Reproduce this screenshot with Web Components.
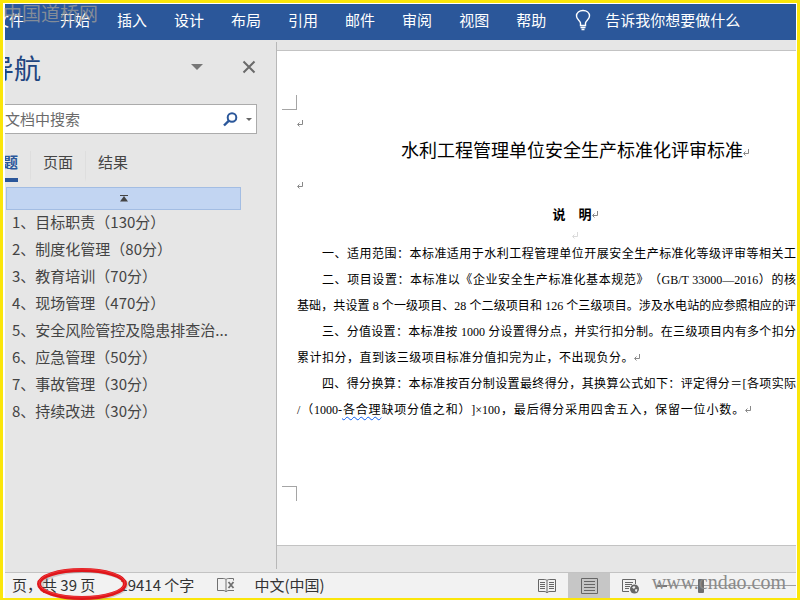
<!DOCTYPE html>
<html lang="zh-CN">
<head>
<meta charset="utf-8">
<title>水利工程管理单位安全生产标准化评审标准</title>
<style>
  html, body { margin: 0; height: 100%; }
  body { font: 15px/20px "Noto Sans CJK SC", sans-serif; color: #444; background: #fbe60a; overflow: hidden; text-spacing-trim: space-all; }
</style>
</head>
<body>
<app-window></app-window>
<script>
class BaseElement extends HTMLElement {
  constructor() {
    super();
    this.attachShadow({ mode: "open" }).innerHTML =
      "<style>*{box-sizing:border-box}button{font:inherit;color:inherit;background:none;border:0;padding:0;margin:0;white-space:nowrap}</style>" +
      this.constructor.markup;
  }
}

class AppWindow extends BaseElement {
  static markup = `
  <style>
    :host { display: flex; flex-direction: column; box-sizing: border-box; min-height: 100vh; border: 3px solid #fbe60a; position: relative; }
    .inner { flex: 1; display: flex; flex-direction: column; background: #e6e6e6; border: solid #fff; border-width: 1px 1px 0 2px; overflow: hidden; }
    main { flex: 1; display: flex; }
    doc-view { flex: 1; min-width: 0; }
    .brand { position: absolute; left: 0; top: 0; font: 19px/20px "Noto Sans CJK SC", sans-serif; color: #9a9a98; opacity: .8; white-space: nowrap; pointer-events: none; }
    .site { position: absolute; right: 11px; bottom: 4px; font: 20px/24px "Liberation Serif", serif; color: #8a8a8a; pointer-events: none; }
    .ring { position: absolute; left: 31px; bottom: -3px; width: 98px; height: 36px; pointer-events: none; }
  </style>
  <div class="inner">
    <ribbon-bar></ribbon-bar>
    <main><nav-pane></nav-pane><doc-view></doc-view></main>
    <status-bar></status-bar>
  </div>
  <div class="brand">中国道桥网</div>
  <div class="site">www.cndao.com</div>
  <svg class="ring" viewBox="0 0 98 36">
    <ellipse cx="50" cy="20" rx="42" ry="14" fill="none" stroke="#777" stroke-opacity=".3" stroke-width="4"/>
    <ellipse cx="48" cy="19" rx="43" ry="14" fill="none" stroke="#e0161b" stroke-width="4"/>
    <ellipse cx="48" cy="18" rx="43" ry="14" fill="none" stroke="#ff6a6a" stroke-opacity=".4" stroke-width="1"/>
  </svg>`;
}

class RibbonBar extends BaseElement {
  static markup = `
  <style>
    :host { display: flex; align-items: center; height: 36px; padding-bottom: 5px; box-sizing: border-box; background: #2b579a; color: #fff; margin-left: -11px; gap: 27px; white-space: nowrap; }
    .file { margin-right: 9px; }
    .tell { display: flex; align-items: center; gap: 14px; margin-left: 2px; }
  </style>
  <button class="file">文件</button><button>开始</button><button>插入</button><button>设计</button><button>布局</button><button>引用</button><button>邮件</button><button>审阅</button><button>视图</button><button>帮助</button>
  <button class="tell">
    <svg width="16" height="22" viewBox="0 0 16 22" fill="none" stroke="#fff" stroke-width="1.4"><path d="M5.500 16.500v-2.500C5 11.500 1.500 10.500 1.500 7 1.500 3.700 4.300 1.500 8 1.500s6.500 2.200 6.500 5.500C14.500 10.500 11 11.500 10.500 14v2.500zM5.500 18.500h5M6.500 20.500h3"/></svg>
    告诉我你想要做什么</button>`;
}

class NavPane extends BaseElement {
  static markup = `
  <style>
    :host { display: flex; flex-direction: column; box-sizing: border-box; width: 290px; margin: 2px 0 3px -18px; border-right: 1px solid #b8b8b8; }
    header { display: flex; align-items: center; height: 50px; padding-right: 20px; }
    h1 { margin: 0; padding-top: 2px; font-size: 27px; line-height: 36px; font-weight: 400; color: #1e4580; flex: 1; }
    header button { display: flex; }
    header button + button { margin-left: 39px; }
    .search { display: flex; align-items: center; height: 30px; margin: 12px 19px 0 -4px; border: 1px solid #ababab; background: #fff; padding: 0 4px 0 6px; }
    input { flex: 1; min-width: 0; border: 0; outline: 0; padding: 0; background: none; font: inherit; color: #444; }
    input::placeholder { color: #6b6b6b; opacity: 1; }
    .search button { display: flex; }
    .search button + button { margin-left: 8px; }
    .tabs { display: flex; margin: 17px 0 0 1px; height: 31px; }
    .tabs button { padding: 0 0 6px; border-bottom: 4px solid transparent; margin-right: 12px; }
    .tabs button + button { padding-left: 12px; border-left: 1px solid #dedede; }
    .tabs .on { color: #2b579a; font-weight: 700; border-bottom-color: #2b579a; }
    .top { display: flex; align-items: center; justify-content: center; height: 23px; margin: 5px 35px 0 19px; background: #c2d5f2; border: 1px solid #a3bde3; }
    ul { list-style: none; margin: -2px 0 0; padding: 0 0 0 25px; line-height: 27px; }
    a { color: inherit; text-decoration: none; white-space: nowrap; }
  </style>
  <header>
    <h1>导航</h1>
    <button aria-label="选项"><svg width="12" height="6"><path d="M0 0h12L6 6z" fill="#777"/></svg></button>
    <button aria-label="关闭"><svg width="14" height="14"><path d="M1.500 1.500l11 11M12.500 1.500l-11 11" stroke="#6a6a6a" stroke-width="2"/></svg></button>
  </header>
  <div class="search">
    <input aria-label="在文档中搜索" placeholder="在文档中搜索">
    <button aria-label="搜索"><svg width="15" height="15" viewBox="0 0 15 15" fill="none" stroke="#2b579a"><circle cx="9" cy="5.500" r="4.300" stroke-width="2"/><path d="M5.700 8.800L1 13.500" stroke-width="2.400"/></svg></button>
    <button aria-label="搜索选项"><svg width="6" height="3"><path d="M0 0h6L3 3z" fill="#666"/></svg></button>
  </div>
  <div class="tabs"><button class="on">标题</button><button>页面</button><button>结果</button></div>
  <button class="top" aria-label="跳到开头"><svg width="8" height="7"><path d="M4 1l4 5.500H0z" fill="#444"/><path d="M0 0h8v1H0z" fill="#444"/></svg></button>
  <ul>
    <li><a href="#1">1、目标职责（130分）</a></li>
    <li><a href="#2">2、制度化管理（80分）</a></li>
    <li><a href="#3">3、教育培训（70分）</a></li>
    <li><a href="#4">4、现场管理（470分）</a></li>
    <li><a href="#5">5、安全风险管控及隐患排查治...</a></li>
    <li><a href="#6">6、应急管理（50分）</a></li>
    <li><a href="#7">7、事故管理（30分）</a></li>
    <li><a href="#8">8、持续改进（30分）</a></li>
  </ul>`;
}

class ParaMark extends BaseElement {
  static markup = `
  <style>:host { display: inline-block; width: 6px; height: 8px; } svg { display: block; }</style>
  <svg width="6" height="8" viewBox="0 0 6 8" fill="none" stroke="#888"><path d="M5.500 0v4.500H1M2.500 2.500l-2 2 2 2"/></svg>`;
}

class TextLine extends BaseElement {
  static markup = `
  <style>
    :host { display: block; max-width: 499px; text-align: justify; text-align-last: justify; white-space: nowrap; box-sizing: border-box; }
    :host([indent]) { padding-left: 25px; }
    :host([short]) { padding-right: 156px; }
    :host([end]) { padding-right: 45px; }
  </style><slot></slot>`;
}

class DocView extends BaseElement {
  static markup = `
  <style>
    :host { display: block; padding: 10px 0 26px; }
    article { background: #fff; border: solid #c3c3c3; border-width: 1px 0; padding: 44px 0; overflow: hidden; color: #000; }
    .crop { width: 15px; height: 15px; margin-left: 5px; border: solid #a5a5a5; border-width: 0 1px 1px 0; }
    .crop.low { margin-top: 63px; border-width: 1px 1px 0 0; }
    .column { min-width: 556px; margin-left: 20px; font: 12px/26px "Liberation Serif", "Noto Sans CJK SC", serif; }
    .empty { display: flex; align-items: center; height: 28px; }
    .empty.second { height: 24px; margin-top: 14px; }
    .tiny { height: 11px; display: flex; align-items: center; justify-content: center; opacity: .3; }
    h2, h3 { margin: 0; text-align: center; font-family: "Noto Sans CJK SC", sans-serif; }
    h2 { font-size: 18px; line-height: 22px; font-weight: 400; }
    h3 { font-size: 13px; line-height: 32px; font-weight: 700; }
    u { text-decoration: underline wavy #0a5cf0 1px; text-underline-offset: 2px; }
  </style>
  <article>
    <div class="crop"></div>
    <div class="column">
      <div class="empty"><para-mark></para-mark></div>
      <h2>水利工程管理单位安全生产标准化评审标准<para-mark></para-mark></h2>
      <div class="empty second"><para-mark></para-mark></div>
      <h3>说　明<para-mark></para-mark></h3>
      <div class="tiny"><para-mark></para-mark></div>
      <text-line indent>一、适用范围：本标准适用于水利工程管理单位开展安全生产标准化等级评审等相关工</text-line>
      <text-line indent>二、项目设置：本标准以《企业安全生产标准化基本规范》（GB/T 33000—2016）的核</text-line>
      <text-line>基础，共设置 8 个一级项目、28 个二级项目和 126 个三级项目。涉及水电站的应参照相应的评</text-line>
      <text-line indent>三、分值设置：本标准按 1000 分设置得分点，并实行扣分制。在三级项目内有多个扣分</text-line>
      <text-line short>累计扣分，直到该三级项目标准分值扣完为止，不出现负分。<para-mark></para-mark></text-line>
      <text-line indent>四、得分换算：本标准按百分制设置最终得分，其换算公式如下：评定得分＝[各项实际</text-line>
      <text-line end>/（1000-<u>各合理</u>缺项分值之和）]×100，最后得分采用四舍五入，保留一位小数。<para-mark></para-mark></text-line>
    </div>
    <div class="crop low"></div>
  </article>`;
}

class StatusBar extends BaseElement {
  static markup = `
  <style>
    :host { display: flex; align-items: center; height: 26px; box-sizing: border-box; background: #f2f2f2; border-top: 1px solid #c3c3c3; padding-left: 7px; color: #333; white-space: nowrap; }
    button, .zoom { display: flex; align-items: center; justify-content: center; height: 100%; }
    .text { padding-bottom: 2px; }
    .words { margin-left: 24px; }
    .proof { margin: 0 19px 0 23px; padding-bottom: 2px; }
    .space { flex: 1; }
    .view { width: 42px; color: #666; }
    .on { background: #c6c6c6; }
    .zoom { width: 144px; padding-left: 4px; }
    .zoom button { width: 11px; }
    input { appearance: none; flex: 1; min-width: 0; height: 14px; margin: 0; background: linear-gradient(#a0a0a0, #a0a0a0) center / 100% 1px no-repeat; }
    input::-webkit-slider-thumb { appearance: none; width: 6px; height: 14px; background: #6e6e6e; border-radius: 1px; }
  </style>
  <button class="text">页，共 39 页</button>
  <button class="text words">19414 个字</button>
  <button class="proof" aria-label="校对"><svg width="18" height="16" viewBox="0 0 18 16" fill="none" stroke="#707070"><path d="M9 14.500V2.500C8 1.500 7 1.500 6 1.500H.5v12H6c1.500 0 2.500.5 3 1.500.5-1 1.500-1.500 3-1.500h5M9 2.500c1-1 2-1 3-1h4.500v2"/><path d="M11.500 5l5 6M16.500 5l-5 6" stroke-width="1.800"/></svg></button>
  <button class="text">中文(中国)</button>
  <span class="space"></span>
  <button class="view" aria-label="阅读视图"><svg width="18" height="16" viewBox="0 0 18 16" fill="none" stroke="currentColor"><path d="M9 15V2.500C8 1.500 7 1.500 6 1.500H.5v12H6c1.500 0 2.500.5 3 1.500.5-1 1.500-1.500 3-1.500h5.500v-12H12c-1 0-2 0-3 1M2 4.500h5M2 6.500h5M2 8.500h5M2 10.500h5M11 4.500h5M11 6.500h5M11 8.500h5M11 10.500h5"/></svg></button>
  <button class="view on" aria-label="页面视图"><svg width="17" height="16" fill="none" stroke="currentColor"><path d="M.5.5h16v15H.5zM3 3.500h11M3 6.500h11M3 9.500h11M3 12.500h11"/></svg></button>
  <button class="view" aria-label="Web 版式视图"><svg width="18" height="16" viewBox="0 0 18 16" fill="none" stroke="currentColor"><path d="M7 13.500H.5V1.500h13V6M3 4.500h8M3 6.500h7M3 8.500h5M3 10.500h4"/><circle cx="12.500" cy="11" r="4.500" fill="#666" stroke="none"/><path d="M10 9.500l2-1.500 1.500 1-1.500 2zM13.500 11l2 .5-1 2.500-1.500-1z" fill="#f2f2f2" stroke="none"/></svg></button>
  <div class="zoom">
    <button aria-label="缩小"><svg width="10" height="2"><path d="M0 0h10v2H0z" fill="#777"/></svg></button>
    <input type="range" aria-label="显示比例" min="0" max="100" value="25">
  </div>`;
}

customElements.define("para-mark", ParaMark);
customElements.define("text-line", TextLine);
customElements.define("ribbon-bar", RibbonBar);
customElements.define("nav-pane", NavPane);
customElements.define("doc-view", DocView);
customElements.define("status-bar", StatusBar);
customElements.define("app-window", AppWindow);
</script>
</body>
</html>
